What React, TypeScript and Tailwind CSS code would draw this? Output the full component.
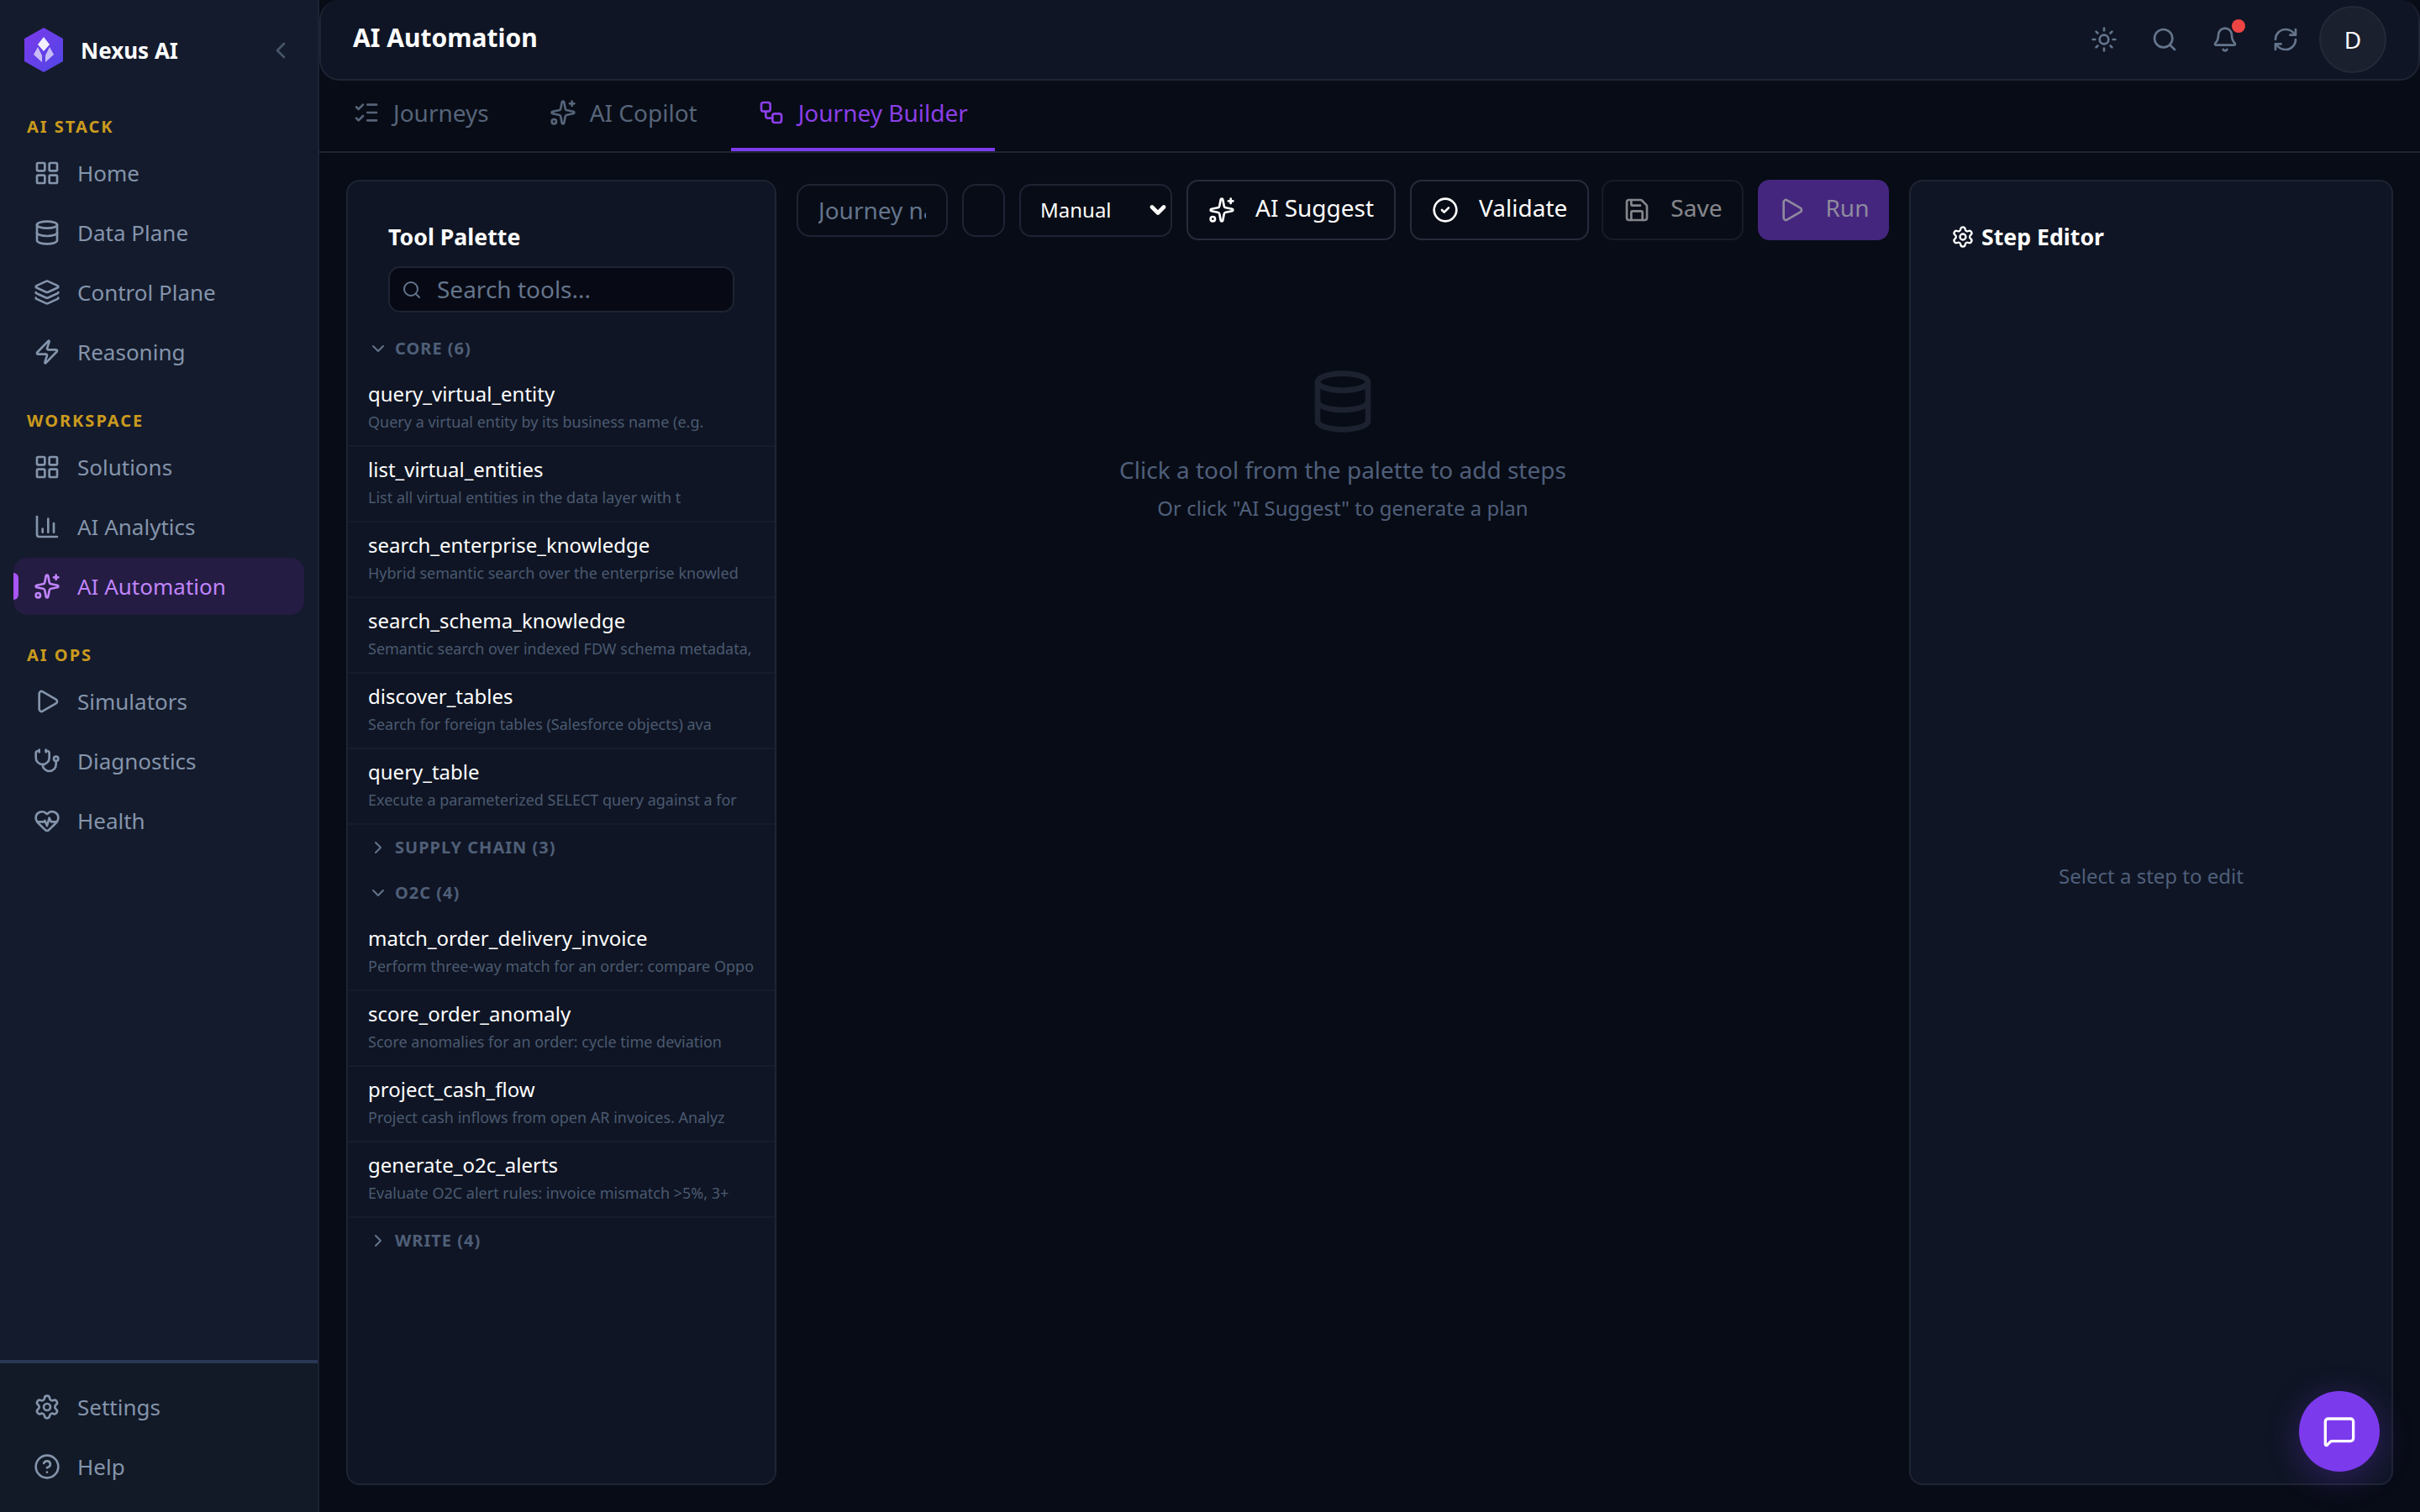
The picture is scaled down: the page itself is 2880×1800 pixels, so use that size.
import {
  Bell,
  ChartColumn,
  ChevronDown,
  ChevronLeft,
  ChevronRight,
  CircleCheck,
  CircleHelp,
  Database,
  HeartPulse,
  Layers,
  LayoutGrid,
  ListChecks,
  MessageSquare,
  Play,
  RefreshCw,
  Save,
  Search,
  Settings,
  Sparkles,
  Stethoscope,
  Sun,
  Workflow,
  Zap,
} from "lucide-react";
import type { LucideIcon } from "lucide-react";

interface NavEntry {
  label: string;
  icon: LucideIcon;
  active?: boolean;
}

const NAV_SECTIONS: { title: string; items: NavEntry[] }[] = [
  {
    title: "AI STACK",
    items: [
      { label: "Home", icon: LayoutGrid },
      { label: "Data Plane", icon: Database },
      { label: "Control Plane", icon: Layers },
      { label: "Reasoning", icon: Zap },
    ],
  },
  {
    title: "WORKSPACE",
    items: [
      { label: "Solutions", icon: LayoutGrid },
      { label: "AI Analytics", icon: ChartColumn },
      { label: "AI Automation", icon: Sparkles, active: true },
    ],
  },
  {
    title: "AI OPS",
    items: [
      { label: "Simulators", icon: Play },
      { label: "Diagnostics", icon: Stethoscope },
      { label: "Health", icon: HeartPulse },
    ],
  },
];

const CORE_TOOLS = [
  ["query_virtual_entity", "Query a virtual entity by its business name (e.g."],
  ["list_virtual_entities", "List all virtual entities in the data layer with t"],
  ["search_enterprise_knowledge", "Hybrid semantic search over the enterprise knowled"],
  ["search_schema_knowledge", "Semantic search over indexed FDW schema metadata,"],
  ["discover_tables", "Search for foreign tables (Salesforce objects) ava"],
  ["query_table", "Execute a parameterized SELECT query against a for"],
];

const O2C_TOOLS = [
  ["match_order_delivery_invoice", "Perform three-way match for an order: compare Oppo"],
  ["score_order_anomaly", "Score anomalies for an order: cycle time deviation"],
  ["project_cash_flow", "Project cash inflows from open AR invoices. Analyz"],
  ["generate_o2c_alerts", "Evaluate O2C alert rules: invoice mismatch >5%, 3+"],
];

function NavItem({ label, icon: Icon, active }: NavEntry) {
  return (
    <div
      className={`relative flex h-[68px] items-center gap-5 rounded-2xl pl-6 text-[26px] ${
        active ? "bg-[#241c42] text-[#c084fc]" : "text-[#8494ab]"
      }`}
    >
      {active && <div className="absolute top-[18px] left-0 h-8 w-[6px] rounded-r-md bg-[#a855f7]" />}
      <Icon size={32} />
      <span>{label}</span>
    </div>
  );
}

function Logo() {
  return (
    <svg width="46" height="53" viewBox="0 0 46 53">
      <defs>
        <linearGradient id="hex" x1="0" y1="0" x2="1" y2="1">
          <stop offset="0" stopColor="#7c3aed" />
          <stop offset="1" stopColor="#4f46e5" />
        </linearGradient>
      </defs>
      <path d="M23 0L46 13V40L23 53L0 40V13Z" fill="url(#hex)" />
      <path d="M23 11L30 20L23 28L16 20Z" fill="#fff" fillOpacity="0.92" />
      <path d="M16 23L11 32L21 41V33ZM30 23L35 32L25 41V33Z" fill="#fff" fillOpacity="0.65" />
    </svg>
  );
}

function Sidebar() {
  return (
    <aside className="flex h-full w-[380px] shrink-0 flex-col border-r-2 border-[#1c2334] bg-[#141b2c]">
      <div className="flex h-[136px] shrink-0 items-start pt-[33px] pl-[29px]">
        <Logo />
        <span className="mt-2 ml-[21px] text-[26px] font-bold text-white">Nexus AI</span>
        <ChevronLeft size={32} className="mt-[11px] mr-[28px] ml-auto text-[#475569]" />
      </div>
      <nav className="flex min-h-0 flex-1 flex-col gap-[33px] px-4">
        {NAV_SECTIONS.map((section) => (
          <div key={section.title}>
            <div className="mb-[6px] h-[30px] pl-4 text-[20px] leading-[30px] font-bold tracking-[2px] text-[#ca9a1e]">
              {section.title}
            </div>
            <div className="flex flex-col gap-[3px]">
              {section.items.map((item) => (
                <NavItem key={item.label} {...item} />
              ))}
            </div>
          </div>
        ))}
      </nav>
      <div className="flex flex-col gap-[3px] border-t-4 border-[#293757] bg-[#121927] px-4 pt-[18px] pb-5">
        <NavItem label="Settings" icon={Settings} />
        <NavItem label="Help" icon={CircleHelp} />
      </div>
    </aside>
  );
}

function TopBar() {
  return (
    <header className="flex h-24 shrink-0 items-center justify-between rounded-[24px] border-2 border-t-0 border-[#1e2433] bg-[#0f1524] pr-[38px] pl-[38px]">
      <h1 className="mb-[6px] text-[30px] font-bold text-white">AI Automation</h1>
      <div className="flex items-center gap-2 text-[#64748b]">
        <button className="flex h-16 w-16 items-center justify-center">
          <Sun size={32} />
        </button>
        <button className="flex h-16 w-16 items-center justify-center">
          <Search size={32} />
        </button>
        <button className="relative flex h-16 w-16 items-center justify-center">
          <Bell size={32} />
          <span className="absolute top-2 right-2 h-4 w-4 rounded-full bg-[#ef4444]" />
        </button>
        <button className="flex h-16 w-16 items-center justify-center">
          <RefreshCw size={32} />
        </button>
        <div className="flex h-20 w-20 items-center justify-center rounded-full border-2 border-[#232936] bg-[#1a202e] text-[28px] text-white">
          D
        </div>
      </div>
    </header>
  );
}

function Tabs() {
  const tabs = [
    { label: "Journeys", icon: ListChecks },
    { label: "AI Copilot", icon: Sparkles },
    { label: "Journey Builder", icon: Workflow, active: true },
  ];
  return (
    <div className="flex h-[86px] shrink-0 gap-2 border-b-2 border-[#1e2433] pl-2">
      {tabs.map(({ label, icon: Icon, active }) => (
        <div
          key={label}
          className={`flex items-center gap-4 border-b-4 px-8 pb-1 text-[28px] ${
            active ? "border-[#7c3aed] text-[#8b3fe8]" : "border-transparent text-[#566479]"
          }`}
        >
          <Icon size={32} />
          <span>{label}</span>
        </div>
      ))}
    </div>
  );
}

function SectionHeader({ label, open }: { label: string; open?: boolean }) {
  const Chevron = open ? ChevronDown : ChevronRight;
  return (
    <div className="flex h-[54px] items-center gap-2 pl-6 text-[20px] font-bold tracking-[1px] text-[#4f5f78]">
      <Chevron size={24} className="text-[#64748b]" />
      <span>{label}</span>
    </div>
  );
}

function ToolRow({ name, desc }: { name: string; desc: string }) {
  return (
    <div className="flex h-[90px] flex-col justify-center overflow-hidden border-b-2 border-[#161c2b] px-6 pb-1 whitespace-nowrap">
      <div className="text-[24px] leading-[36px] text-white">{name}</div>
      <div className="text-[18px] leading-[30px] text-[#4b5a70]">{desc}</div>
    </div>
  );
}

function ToolPalette() {
  return (
    <section className="flex w-[512px] shrink-0 flex-col overflow-hidden rounded-2xl border-2 border-[#1e2433] bg-[#0f1524]">
      <div className="px-12 pt-[45px]">
        <h2 className="text-[26.7px] leading-[42px] font-bold text-white">Tool Palette</h2>
        <div className="mt-[14px] flex h-[55px] items-center gap-[18px] rounded-[14px] border-2 border-[#1e2433] bg-[#070a14] pl-[14px]">
          <Search size={24} className="shrink-0 text-[#64748b]" />
          <input
            placeholder="Search tools..."
            className="w-full bg-transparent pb-[2px] text-[28px] outline-none placeholder:text-[#64748b]"
          />
        </div>
      </div>
      <div className="mt-4">
        <SectionHeader label="CORE (6)" open />
        {CORE_TOOLS.map(([name, desc]) => (
          <ToolRow key={name} name={name} desc={desc} />
        ))}
        <SectionHeader label="SUPPLY CHAIN (3)" />
        <SectionHeader label="O2C (4)" open />
        {O2C_TOOLS.map(([name, desc]) => (
          <ToolRow key={name} name={name} desc={desc} />
        ))}
        <SectionHeader label="WRITE (4)" />
      </div>
    </section>
  );
}

function ToolbarButton({ icon: Icon, label, className }: { icon: LucideIcon; label: string; className: string }) {
  return (
    <button
      className={`flex h-[72px] shrink-0 items-center gap-6 rounded-[14px] px-6 text-[28px] whitespace-nowrap ${className}`}
    >
      <Icon size={32} />
      <span className="pb-[6px]">{label}</span>
    </button>
  );
}

function Toolbar() {
  return (
    <div className="flex h-[72px] shrink-0 items-center gap-[17px]">
      <input
        placeholder="Journey name"
        className="h-[63px] w-[180px] shrink-0 rounded-2xl border-2 border-[#1e2433] bg-transparent px-6 text-[28px] outline-none placeholder:text-[#64748b]"
      />
      <input className="h-[63px] w-[51px] shrink-0 rounded-2xl border-2 border-[#1e2433] bg-transparent outline-none" />
      <div className="relative shrink-0">
        <select
          defaultValue="Manual"
          className="block h-[63px] w-[182px] appearance-none rounded-[14px] border-2 border-[#1e2433] bg-[#080c16] pl-[23px] text-[24px] text-white outline-none"
        >
          <option>Manual</option>
        </select>
        <ChevronDown
          size={28}
          strokeWidth={4}
          className="pointer-events-none absolute top-[17px] right-[3px] text-white"
        />
      </div>
      <ToolbarButton icon={Sparkles} label="AI Suggest" className="border-2 border-[#262c3b] text-white" />
      <ToolbarButton icon={CircleCheck} label="Validate" className="border-2 border-[#262c3b] text-white" />
      <ToolbarButton icon={Save} label="Save" className="-ml-[2px] border-2 border-[#262c3b] text-white opacity-50" />
      <ToolbarButton icon={Play} label="Run" className="bg-[#44267f] text-[#8f8a9e]" />
    </div>
  );
}

function Canvas() {
  return (
    <section className="flex min-w-0 flex-1 flex-col">
      <Toolbar />
      <div className="mt-[152px] flex flex-col items-center">
        <Database size={80} className="text-[#1c2230]" />
        <p className="mt-5 text-[28px] leading-[42px] text-[#4f5f7a]">Click a tool from the palette to add steps</p>
        <p className="mt-[7px] text-[24px] leading-[36px] text-[#4f5f7a]">Or click "AI Suggest" to generate a plan</p>
      </div>
    </section>
  );
}

function StepEditor() {
  return (
    <section className="flex w-[576px] shrink-0 flex-col rounded-2xl border-2 border-[#1e2433] bg-[#0f1524]">
      <h2 className="flex items-center gap-2 pt-[45px] pl-12 text-[26.7px] leading-[42px] font-bold text-white">
        <Settings size={28} />
        Step Editor
      </h2>
      <div className="flex flex-1 items-center justify-center pt-4 text-[24px] text-[#4f5f7a]">
        Select a step to edit
      </div>
    </section>
  );
}

export default function App() {
  return (
    <div className="flex h-screen w-full overflow-hidden bg-[#080c16] font-['Noto_Sans',sans-serif]">
      <Sidebar />
      <main className="flex min-w-0 flex-1 flex-col">
        <TopBar />
        <Tabs />
        <div className="flex min-h-0 flex-1 gap-6 p-8">
          <ToolPalette />
          <Canvas />
          <StepEditor />
        </div>
      </main>
      <button className="fixed right-12 bottom-12 flex h-24 w-24 items-center justify-center rounded-full bg-[#7c3aed] text-white shadow-[0_8px_40px_rgba(124,58,237,0.3)]">
        <MessageSquare size={40} />
      </button>
    </div>
  );
}
